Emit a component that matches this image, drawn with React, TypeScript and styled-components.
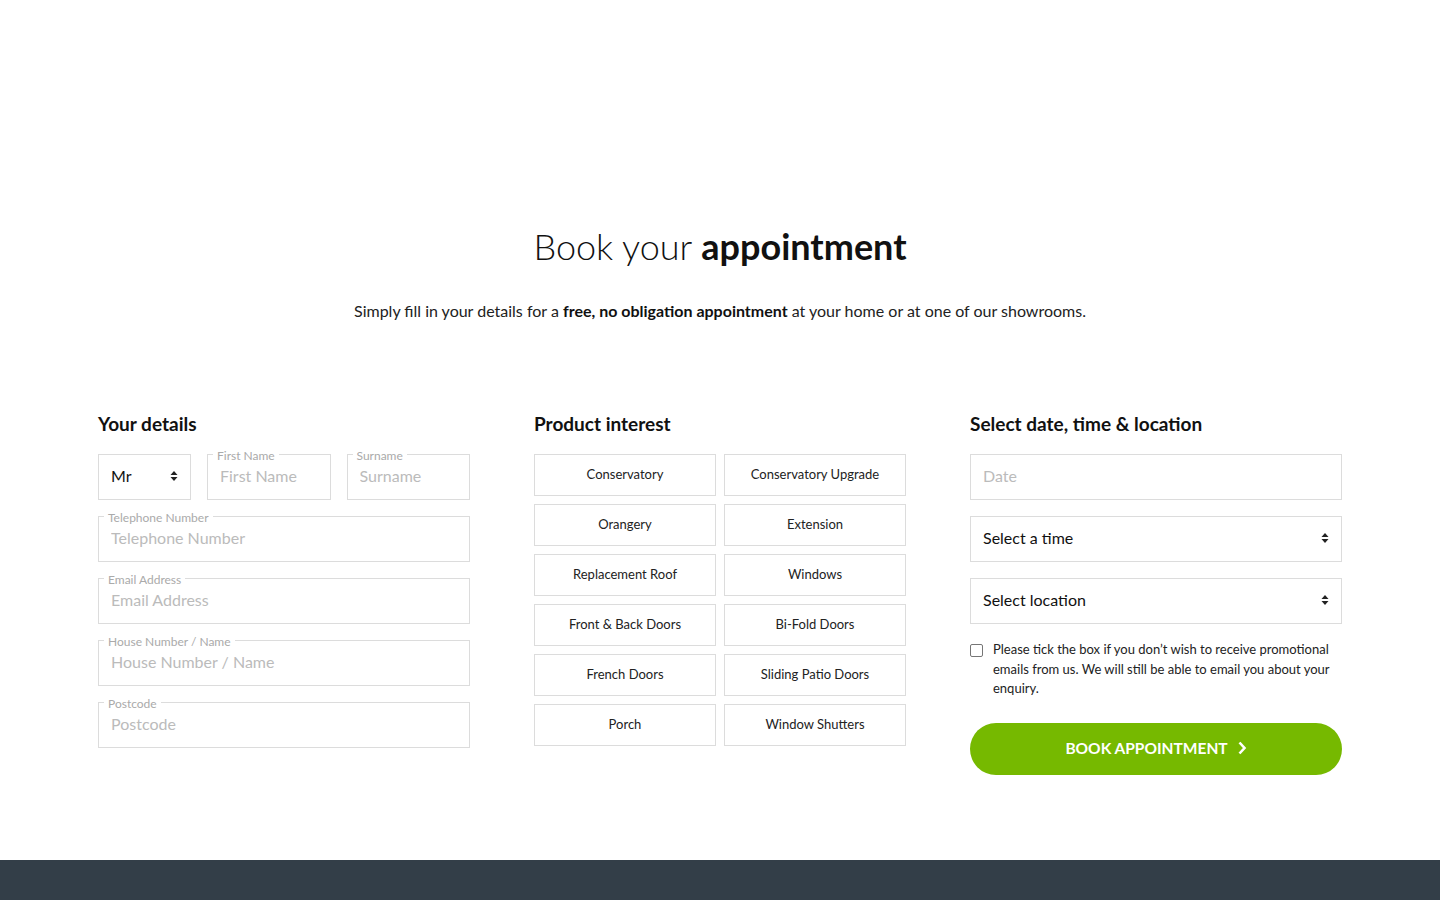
import React from "react";
import styled, { createGlobalStyle } from "styled-components";

const GlobalStyle = createGlobalStyle`
  * { box-sizing: border-box; }
  body {
    margin: 0;
    background: #fff;
    font-family: "Lato", "Liberation Sans", sans-serif;
    color: #111;
  }
`;

const Page = styled.div`
  min-height: 900px;
  display: flex;
  flex-direction: column;
`;

const Section = styled.section`
  padding: 226px 98px 85px;
`;

const Title = styled.h1`
  margin: 0;
  text-align: center;
  font-size: 36px;
  line-height: 40px;
  font-weight: 300;
  color: #111;
  b { font-weight: 700; }
`;

const Intro = styled.p`
  margin: 35px 0 0;
  text-align: center;
  font-size: 16px;
  line-height: 20px;
  color: #222;
  b { font-weight: 700; color: #111; }
`;

const Columns = styled.div`
  margin-top: 92px;
  display: grid;
  grid-template-columns: repeat(3, 372px);
  justify-content: space-between;
  align-items: start;
`;

const Column = styled.div`
  display: flex;
  flex-direction: column;
`;

const ColumnTitle = styled.h2`
  margin: 0 0 19px;
  font-size: 19px;
  line-height: 22px;
  font-weight: 700;
  color: #111;
`;

const Stack = styled.div`
  display: flex;
  flex-direction: column;
  gap: 16px;
`;

const Row = styled.div`
  display: grid;
  grid-template-columns: 93px 1fr 1fr;
  gap: 16px;
`;

const Field = styled.div`
  position: relative;
  height: 46px;
  border: 1px solid #dcdcdc;
  background: #fff;
`;

const FloatLabel = styled.span`
  position: absolute;
  top: -6px;
  left: 5px;
  padding: 0 4px;
  background: #fff;
  font-size: 12px;
  line-height: 14px;
  color: #aaa;
`;

const Input = styled.input<{ $pad?: number }>`
  width: 100%;
  height: 100%;
  border: 0;
  outline: none;
  background: transparent;
  padding: 0 ${(p) => p.$pad ?? 12}px 4px;
  font-family: inherit;
  font-size: 16px;
  color: #222;
  &::placeholder { color: #bbb; }
`;

const Select = styled.select`
  width: 100%;
  height: 100%;
  border: 0;
  outline: none;
  background: transparent;
  appearance: none;
  padding: 0 30px 4px 12px;
  font-family: inherit;
  font-size: 16px;
  color: #111;
`;

const Arrows = styled.svg`
  position: absolute;
  right: 12px;
  top: 50%;
  margin-top: -7px;
  pointer-events: none;
`;

const ProductGrid = styled.div`
  display: grid;
  grid-template-columns: 1fr 1fr;
  gap: 8px;
`;

const ProductButton = styled.button`
  height: 42px;
  border: 1px solid #dcdcdc;
  background: #fff;
  padding: 0 0 2px;
  font-family: inherit;
  font-size: 13px;
  color: #222;
  cursor: pointer;
`;

const Consent = styled.label`
  margin-top: 16px;
  display: flex;
  gap: 10px;
  align-items: flex-start;
  font-size: 13px;
  line-height: 19.5px;
  color: #222;
`;

const Tick = styled.input`
  appearance: none;
  flex: none;
  width: 13px;
  height: 13px;
  margin: 4px 0 0;
  border: 1px solid #767676;
  border-radius: 2px;
  background: #fff;
`;

const BookButton = styled.button`
  margin-top: 24px;
  height: 52px;
  border: 0;
  border-radius: 26px;
  background: #76b900;
  color: #fff;
  padding: 0 0 2px;
  font-family: inherit;
  font-size: 15.5px;
  font-weight: 700;
  display: flex;
  align-items: center;
  justify-content: center;
  gap: 9px;
  cursor: pointer;
`;

const Footer = styled.footer`
  margin-top: auto;
  height: 40px;
  background: #333e48;
`;

const SelectArrows = () => (
  <Arrows width="8" height="12" viewBox="0 0 8 12">
    <path d="M4 1 L7.5 5 H0.5 Z M4 11 L7.5 7 H0.5 Z" fill="#222" />
  </Arrows>
);

const products = [
  "Conservatory",
  "Conservatory Upgrade",
  "Orangery",
  "Extension",
  "Replacement Roof",
  "Windows",
  "Front & Back Doors",
  "Bi-Fold Doors",
  "French Doors",
  "Sliding Patio Doors",
  "Porch",
  "Window Shutters",
];

const detailFields = [
  "Telephone Number",
  "Email Address",
  "House Number / Name",
  "Postcode",
];

export default function App() {
  return (
    <Page>
      <GlobalStyle />
      <Section>
        <Title>
          Book your <b>appointment</b>
        </Title>
        <Intro>
          Simply fill in your details for a <b>free, no obligation appointment</b> at your
          home or at one of our showrooms.
        </Intro>
        <Columns>
          <Column>
            <ColumnTitle>Your details</ColumnTitle>
            <Stack>
              <Row>
                <Field>
                  <Select defaultValue="Mr">
                    <option>Mr</option>
                    <option>Mrs</option>
                    <option>Miss</option>
                    <option>Ms</option>
                  </Select>
                  <SelectArrows />
                </Field>
                <Field>
                  <FloatLabel>First Name</FloatLabel>
                  <Input placeholder="First Name" />
                </Field>
                <Field>
                  <FloatLabel>Surname</FloatLabel>
                  <Input placeholder="Surname" />
                </Field>
              </Row>
              {detailFields.map((f) => (
                <Field key={f}>
                  <FloatLabel>{f}</FloatLabel>
                  <Input placeholder={f} />
                </Field>
              ))}
            </Stack>
          </Column>
          <Column>
            <ColumnTitle>Product interest</ColumnTitle>
            <ProductGrid>
              {products.map((p) => (
                <ProductButton key={p} type="button">
                  {p}
                </ProductButton>
              ))}
            </ProductGrid>
          </Column>
          <Column>
            <ColumnTitle>Select date, time &amp; location</ColumnTitle>
            <Stack>
              <Field>
                <Input placeholder="Date" />
              </Field>
              <Field>
                <Select defaultValue="">
                  <option value="">Select a time</option>
                </Select>
                <SelectArrows />
              </Field>
              <Field>
                <Select defaultValue="">
                  <option value="">Select location</option>
                </Select>
                <SelectArrows />
              </Field>
            </Stack>
            <Consent>
              <Tick type="checkbox" />
              <span>
                Please tick the box if you don’t wish to receive promotional emails from us. We
                will still be able to email you about your enquiry.
              </span>
            </Consent>
            <BookButton type="button">
              BOOK APPOINTMENT
              <svg width="10" height="14" viewBox="0 0 10 14">
                <path
                  d="M2.5 1.5 L7.5 7 L2.5 12.5"
                  fill="none"
                  stroke="#fff"
                  strokeWidth="2.6"
                  strokeLinejoin="miter"
                />
              </svg>
            </BookButton>
          </Column>
        </Columns>
      </Section>
      <Footer />
    </Page>
  );
}
